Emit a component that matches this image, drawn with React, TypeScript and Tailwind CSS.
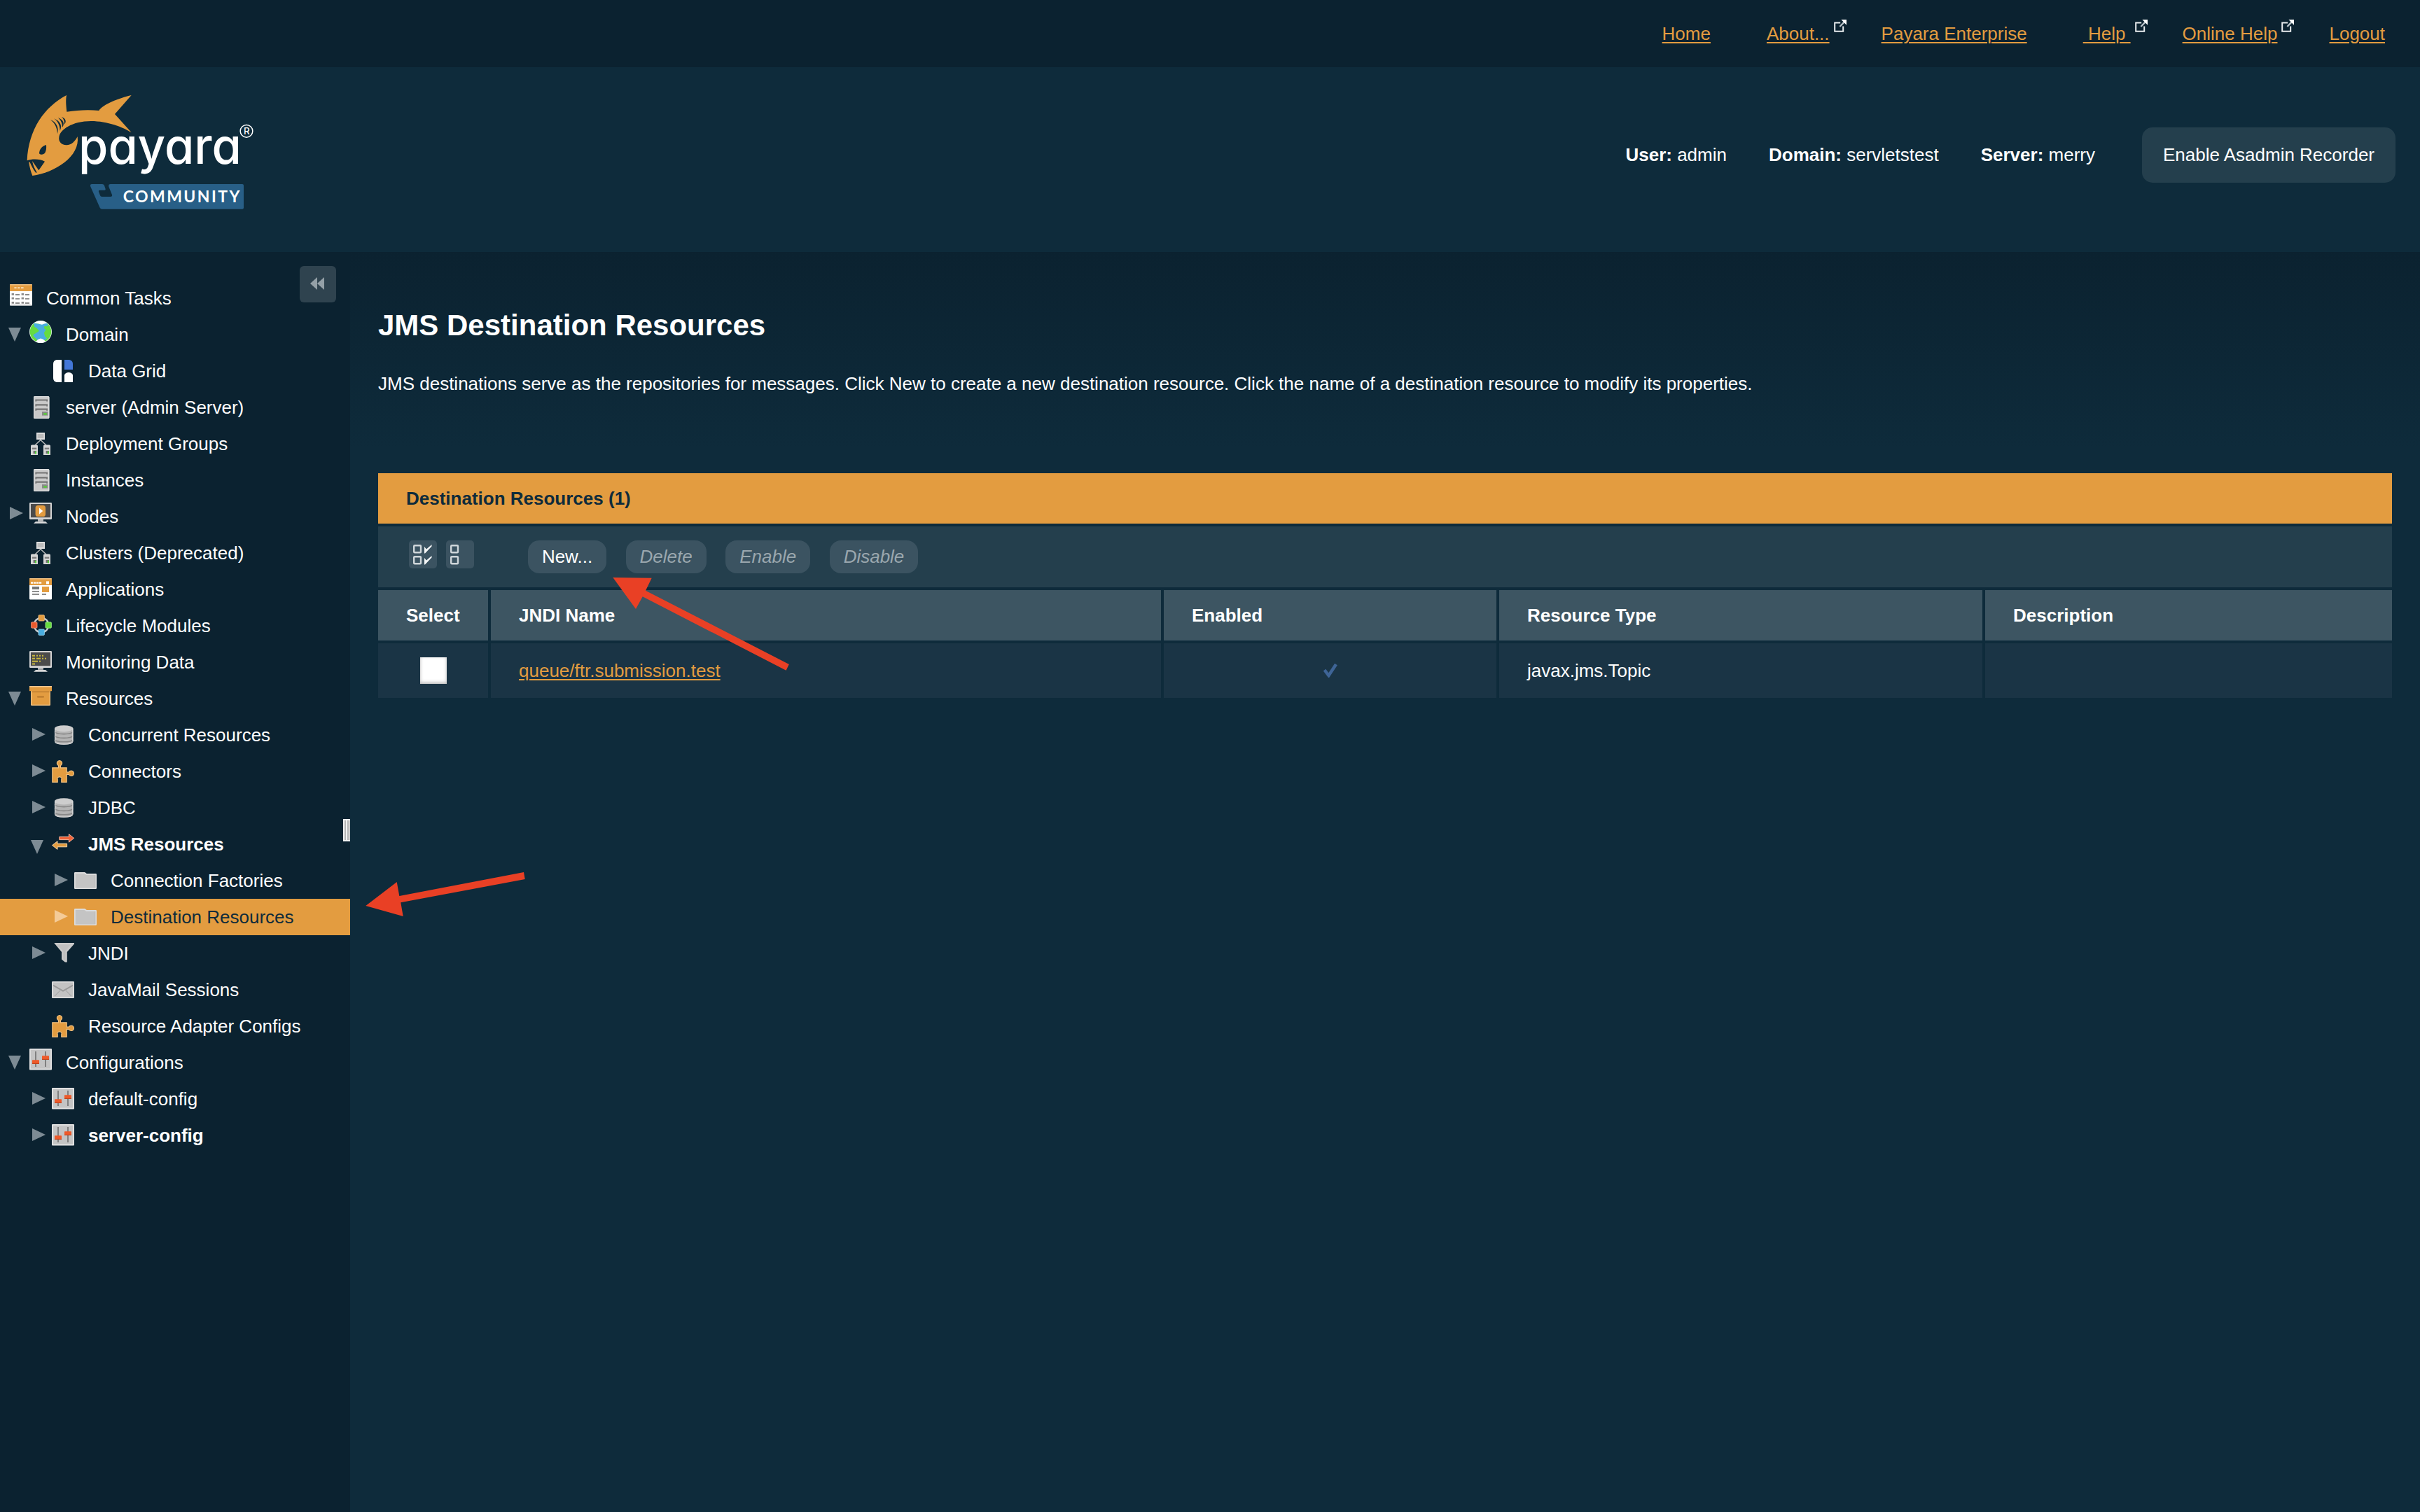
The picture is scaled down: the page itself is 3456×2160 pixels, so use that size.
import React from "react";

type IconName =
  | "calendar"
  | "globe"
  | "grid"
  | "server"
  | "cluster"
  | "nodes"
  | "apps"
  | "lifecycle"
  | "terminal"
  | "box"
  | "database"
  | "puzzle"
  | "transfer"
  | "folder"
  | "funnel"
  | "mail"
  | "sliders";

type TreeItem = {
  label: string;
  icon: IconName;
  level: 0 | 1 | 2;
  handle?: "open" | "closed";
  bold?: boolean;
  selected?: boolean;
  raised?: boolean;
  root?: boolean;
};

const TREE: TreeItem[] = [
  { label: "Common Tasks", icon: "calendar", level: 0, raised: true, root: true },
  { label: "Domain", icon: "globe", level: 0, handle: "open", raised: true },
  { label: "Data Grid", icon: "grid", level: 1 },
  { label: "server (Admin Server)", icon: "server", level: 0 },
  { label: "Deployment Groups", icon: "cluster", level: 0 },
  { label: "Instances", icon: "server", level: 0 },
  { label: "Nodes", icon: "nodes", level: 0, handle: "closed", raised: true },
  { label: "Clusters (Deprecated)", icon: "cluster", level: 0 },
  { label: "Applications", icon: "apps", level: 0 },
  { label: "Lifecycle Modules", icon: "lifecycle", level: 0 },
  { label: "Monitoring Data", icon: "terminal", level: 0 },
  { label: "Resources", icon: "box", level: 0, handle: "open", raised: true },
  { label: "Concurrent Resources", icon: "database", level: 1, handle: "closed" },
  { label: "Connectors", icon: "puzzle", level: 1, handle: "closed" },
  { label: "JDBC", icon: "database", level: 1, handle: "closed" },
  { label: "JMS Resources", icon: "transfer", level: 1, handle: "open", bold: true },
  { label: "Connection Factories", icon: "folder", level: 2, handle: "closed" },
  { label: "Destination Resources", icon: "folder", level: 2, handle: "closed", selected: true },
  { label: "JNDI", icon: "funnel", level: 1, handle: "closed" },
  { label: "JavaMail Sessions", icon: "mail", level: 1 },
  { label: "Resource Adapter Configs", icon: "puzzle", level: 1 },
  { label: "Configurations", icon: "sliders", level: 0, handle: "open", raised: true },
  { label: "default-config", icon: "sliders", level: 1, handle: "closed" },
  { label: "server-config", icon: "sliders", level: 1, handle: "closed", bold: true },
];

function Screen({ children }: { children: React.ReactNode }) {
  return (
    <>
      <rect x="0" y="0" width="16" height="12" rx=".6" fill="#d4d4d4" />
      <rect x="1" y="1" width="14" height="9.6" fill="#4b4b4b" />
      {children}
      <path d="M6 12h4v1.4H6z" fill="#b9b9b9" />
      <path d="M4.5 13.5h7l1.5 1.4H3z" fill="#d8d8d8" />
    </>
  );
}

const ICONS: Record<IconName, React.ReactNode> = {
  calendar: (
    <>
      <rect width="16" height="15.2" rx=".6" fill="#fff" />
      <rect y="14.5" width="16" height=".8" rx=".4" fill="#cfcfcf" />
      <path d="M.6 0h14.8q.6 0 .6.6V5H0V.6Q0 0 .6 0z" fill="#e39c40" />
      <path d="M.5.4h15" stroke="#f0c48c" strokeWidth=".7" />
      <path d="M3.2 2.6h1.6M5.6 2.6h1.6M8 2.6h1.8" stroke="#f5d3a3" strokeWidth="1.1" />
      {[7.2, 10.1, 13.2].map((y) => (
        <g key={y} stroke="#8b8b8b" strokeWidth="1">
          <path d={`M1.3 ${y}h1.7M8.3 ${y}h1.7`} strokeWidth="1.4" />
          <path d={`M4 ${y + 0.3}h3M11 ${y + 0.3}h3`} strokeWidth=".9" />
        </g>
      ))}
    </>
  ),
  globe: (
    <>
      <circle cx="8" cy="8" r="8" fill="#dff3e0" />
      <circle cx="8" cy="8" r="7.6" fill="#66dc40" />
      <path d="M3 1.8L8 2.6l4.4-.8 1 1.6-1.6 1.2-.6 1 .4 1.200-1.2 2 .8 2.6 1.400 1.4-2 1.200H6L3.400 11.600l-.800-1.4 3.2-2L7 7.400 5.2 5.4 3.6 4.4z" fill="#4aaee0" />
      <path d="M10.400 4.200l2-.400-.400 2-1.200.200z" fill="#66dc40" />
      <path d="M3.2 1.7A8 8 0 0 1 12.8 1.7Q10.4 2 9 2.9 7 2.1 3.2 1.7z" fill="#fff" />
      <path d="M4.4 15.1A8 8 0 0 0 11.6 15.1Q9.8 13 8 12.8 6 13.2 4.4 15.1z" fill="#fff" />
    </>
  ),
  grid: (
    <>
      <path d="M7 0v16H3.4Q1 15.6 1 13V3Q1 .4 3.4 0z" fill="#fff" />
      <path d="M9 0h3.5Q15 .5 15 3v4H9z" fill="#4377d8" />
      <path d="M9 16v-5.2Q9.8 9 12 9t3 1.8V16z" fill="#fff" />
    </>
  ),
  server: (
    <>
      <rect x="3" y="0" width="11.2" height="16" rx=".8" fill="#c9c9c9" />
      <rect x="3.3" y=".3" width="10.6" height="15.4" rx=".6" fill="none" stroke="#e2e2e2" strokeWidth=".6" />
      {[2.2, 5.6, 8.8].map((y) => (
        <path key={y} d={`M4.2 ${y}h8.8v1.6h-.9v-.5h-7v.5h-.9z`} fill="#757575" />
      ))}
      <rect x="9" y="11" width="4.2" height="2.8" fill="#8a8a8a" />
      <rect x="10.2" y="12.1" width="2.2" height="1.2" fill="#55d335" />
    </>
  ),
  cluster: (
    <>
      <path d="M4 9L8 5.2 12 9" fill="none" stroke="#bdbdbd" strokeWidth=".7" />
      <rect x="5" y="0" width="6" height="5" fill="#dedede" />
      <rect x="5.8" y="1" width="4.4" height="3" fill="#bcbcbc" />
      {[1, 10].map((x) => (
        <g key={x}>
          <path d={`M${x} 9.6q0-.8.8-.8h3.4q.8 0 .8.8V16h-5z`} fill="#d6d6d6" />
          <rect x={x + 0.9} y="10.8" width="3.2" height="1.2" fill="#7e7e7e" />
          <rect x={x + 1.8} y="13" width="2.2" height="2" fill="#707070" />
          <rect x={x + 3} y="13.4" width="1" height="1.8" fill="#4fd233" />
        </g>
      ))}
    </>
  ),
  nodes: (
    <Screen>
      <rect x="4.3" y="2" width="7.2" height="8" rx="1.8" fill="#e39c40" />
      <path d="M7 3.7L9.6 6 7 8.3z" fill="#fff" />
    </Screen>
  ),
  apps: (
    <>
      <rect width="16" height="15.2" rx=".6" fill="#fff" />
      <path d="M.6 0h14.8q.6 0 .6.6V5H0V.6Q0 0 .6 0z" fill="#e39c40" />
      <path d="M.5.4h15" stroke="#f0c48c" strokeWidth=".7" />
      <path d="M1 3.3h8" stroke="#fff" strokeWidth="1.1" strokeDasharray="1.6 .4" />
      <rect x="12" y="2.2" width="2" height="2" fill="#fff" />
      <rect x="2" y="6" width="5" height="2" fill="#777" />
      <path d="M2 9.5h5M2 11.5h5M9 11.5h3" stroke="#8d8d8d" strokeWidth="1" />
      <rect x="9" y="6" width="5" height="4" fill="#e39c40" />
    </>
  ),
  lifecycle: (
    <>
      <circle cx="8.5" cy="7.5" r="5.2" fill="none" stroke="#c6ccd0" strokeWidth="1.1" />
      <rect x="6.5" y=".3" width="4.2" height="4.2" rx=".6" fill="#e39c40" stroke="#f0c48c" strokeWidth=".4" />
      <rect x="1.3" y="5.4" width="4.2" height="4.2" rx=".6" fill="#ea5a2d" stroke="#f29a7f" strokeWidth=".4" />
      <rect x="11.5" y="5.4" width="4.2" height="4.2" rx=".6" fill="#66dc40" stroke="#a5eb8e" strokeWidth=".4" />
      <rect x="6.5" y="10.5" width="4.2" height="4.2" rx=".6" fill="#4aaee0" stroke="#96d2ee" strokeWidth=".4" />
    </>
  ),
  terminal: (
    <Screen>
      <g stroke="#c9b83e" strokeWidth="1">
        <path d="M2 3.4h2M5 3.4h1M7 3.4h1M9 3.4h1" />
        <path d="M2 5.4h2M5 5.4h3M9 5.4h1M11 5.4h1" />
        <path d="M2 7.4h4M7 7.4h1M2 9.3h2" />
      </g>
    </Screen>
  ),
  box: (
    <>
      <path d="M1 4h14v10.4q0 .6-.6.6H1.6q-.6 0-.6-.6z" fill="#f0c07f" />
      <path d="M1.7 4h12.6v10.3H1.7z" fill="#e39c40" />
      <path d="M1.7 4.6h12.6v1H1.7z" fill="#c48434" />
      <path d="M0 1h16v3.6H0z" fill="#e39c40" />
      <path d="M0 1.4h16" stroke="#f3c88f" strokeWidth=".8" />
      <rect x="5.5" y="8" width="5" height="1.4" rx=".6" fill="#c28030" />
    </>
  ),
  database: (
    <>
      <path d="M2 3.4v9.200q0 2.3 6.6 2.3t6.6-2.3V3.400z" fill="#b4b4b4" />
      <ellipse cx="8.6" cy="3.4" rx="6.6" ry="2.3" fill="#cdcdcd" />
      <path d="M2 5.7q1 1.6 6.6 1.6t6.6-1.6M2 8.600q1 1.6 6.6 1.6t6.6-1.6M2 11.4q1 1.5 6.6 1.5t6.6-1.5" fill="none" stroke="#888" strokeWidth=".8" />
      <path d="M2.3 3.4v9.200M14.9 3.4v9.200" stroke="#dedede" strokeWidth=".6" />
      <path d="M2.4 13.2q1.6 1.4 6.2 1.4t6.2-1.4" fill="none" stroke="#d8d8d8" strokeWidth=".6" />
    </>
  ),
  puzzle: (
    <path
      d="M.4 5.4h4.4V3.9Q3.4 2.8 3.8 1.4 4.4.3 5.5.3t1.7 1.1Q7.6 2.8 6.2 3.9v1.5h4.4v3.2h1.5q1-1.4 2.3-1 1.3.4 1.3 1.8t-1.3 1.8q-1.3.3-2.3-1h-1.5v5.5H6.9v-1.9q.6-1.6-1.4-2-2 .4-1.4 2v1.9H.4z"
      fill="#e39c40"
      stroke="#f0c07f"
      strokeWidth=".6"
    />
  ),
  transfer: (
    <>
      <path d="M5.4 2.7h6.8V.8L15.8 3.7l-3.6 2.9V4.8H5.4z" fill="#f0643a" stroke="#f5b59d" strokeWidth=".5" />
      <path d="M10.8 7.6H4V5.9L.3 8.8 4 11.7V9.9h6.8z" fill="#e39c40" stroke="#f6d6a9" strokeWidth=".5" />
    </>
  ),
  folder: (
    <>
      <path d="M0 2.6q0-.6.6-.6h7l1.3 1h6.5q.6 0 .6.6v9.8q0 .6-.6.6H.6q-.6 0-.6-.6z" fill="#dcdcdc" />
      <path d="M.9 3h6.4l1.3 1h6.2v9.2H.9z" fill="#c4c4c4" />
      <path d="M14.9 4v9" stroke="#b3b3b3" strokeWidth=".4" />
    </>
  ),
  funnel: (
    <>
      <path d="M1.6.5H16V1.2L10.9 7v7.3H9.4L7 12.2V7z" fill="#cacaca" />
      <path d="M3.6 1.8h9.8L9.7 6.4v6.8L8.2 12V6.4z" fill="#b8b8b8" opacity=".55" />
    </>
  ),
  mail: (
    <>
      <rect x="0" y="2" width="16" height="12" rx=".6" fill="#e0e0e0" />
      <rect x=".8" y="2.8" width="14.4" height="10.4" fill="#c3c3c3" />
      <path d="M1 4.8l7 4 7-4" fill="none" stroke="#9a9a9a" strokeWidth=".9" />
      <path d="M2 12.6L6 8.4M14 12.6L10 8.4" stroke="#a9a9a9" strokeWidth=".6" />
    </>
  ),
  sliders: (
    <>
      <rect width="16" height="15.2" rx=".5" fill="#e4e4e4" />
      <rect x=".9" y=".9" width="14.2" height="13.4" fill="#c4c4c4" />
      <path d="M4.5 2v11M11.5 2v11" stroke="#6f6f6f" strokeWidth=".8" />
      <rect x="2" y="8.1" width="5" height="2.9" rx=".3" fill="#ee5a2a" />
      <rect x="9" y="5.1" width="5" height="2.9" rx=".3" fill="#ee5a2a" />
      <path d="M2 10.7h5M9 7.7h5" stroke="#b9421d" strokeWidth=".5" />
    </>
  ),
};

function Handle({ kind, selected }: { kind?: "open" | "closed"; selected?: boolean }) {
  return (
    <svg viewBox="0 0 32 32" className={selected ? "size-8 shrink-0 text-[#f4cb98]" : "size-8 shrink-0 text-[#7d8b94]"} fill="currentColor">
      {kind === "open" && <path d="M2 10h18l-9 20z" />}
      {kind === "closed" && <path d="M4 6v18l19-9z" />}
    </svg>
  );
}

const INDENT = ["pl-[10px]", "pl-[42px]", "pl-[74px]"];

function TreeRow({ item }: { item: TreeItem }) {
  return (
    <li
      className={`flex h-[52px] items-start ${item.root ? "pl-[14px]" : INDENT[item.level]} ${
        item.selected ? "bg-[#e39c40] text-[#0e2b3b]" : "text-white"
      } ${item.bold ? "font-bold" : ""}`}
    >
      <span className={`flex shrink-0 ${item.raised ? "pt-[6px]" : "pt-[10px]"}`}>
        {!item.root && <Handle kind={item.handle} selected={item.selected} />}
        <svg viewBox="0 0 16 16" className="size-8 shrink-0">
          {ICONS[item.icon]}
        </svg>
      </span>
      <span className="ml-5 leading-[52px] whitespace-nowrap">{item.label}</span>
    </li>
  );
}

function ExternalIcon() {
  return (
    <svg viewBox="0 0 9 9" className="mb-[22px] ml-[6px] size-[18px]">
      <path d="M4.600 2.200H.6V8.400H6.600V4.800" fill="none" stroke="#e8ecee" strokeWidth="1" />
      <path d="M4.200 5L7.400 1.700" stroke="#b9c3c9" strokeWidth="1.200" />
      <path d="M5.200 0H9V3.900z" fill="#fff" />
    </svg>
  );
}

function NavLink({ label, external, className }: { label: string; external?: boolean; className: string }) {
  return (
    <span className={`flex items-center ${className}`}>
      <a className="whitespace-pre text-[#e39c40] underline decoration-2 underline-offset-[3px]">{label}</a>
      {external && <ExternalIcon />}
    </span>
  );
}

function Logo() {
  return (
    <svg viewBox="99 120 1002 522" className="h-[174px] w-[334px]">
      <path
        d="M285 138C190 188 122 285 116 418L123 419C126 445 132 465 139 483C235 470 345 400 332 315C322 335 306 352 285 352C262 352 250 335 253 318C257 285 310 249 390 249C460 249 528 275 563 298L492 219L563 138C510 150 440 178 424 204C380 199 330 202 286 209C283 180 281 160 285 138z"
        fill="#e39c40"
      />
      <path d="M116 418C140 409 172 411 192 422L166 460L138 420C142 440 150 455 158 469L154 471C142 455 134 440 128 425L122 424z" fill="#0e2b3b" />
      <path d="M198 351C180 355 168 370 168 388C176 396 188 392 193 385C198 375 199 365 198 351z" fill="#0e2b3b" />
      <g fill="#0e2b3b">
        <path d="M215 243C240 252 254 275 246 304C245 278 235 256 215 243z" />
        <path d="M231 238C256 248 269 268 257 290C257 268 248 250 231 238z" />
        <path d="M248 234C271 242 280 262 266 276C268 258 260 244 248 234z" />
        <path d="M264 231C282 237 286 252 276 263C277 250 273 240 264 231z" />
      </g>
      <text
        x="336"
        y="432"
        textLength="699"
        lengthAdjust="spacingAndGlyphs"
        fill="#fff"
        fontSize="212"
        fontWeight="500"
        fontFamily="Inter, sans-serif"
        style={{ fontFeatureSettings: '"cv11"' }}
      >
        payara
      </text>
      <circle cx="1056" cy="292" r="26.500" fill="none" stroke="#fff" strokeWidth="4.500" />
      <text x="1057" y="306" textAnchor="middle" fill="#fff" fontSize="40" fontWeight="500" fontFamily="Inter, sans-serif">
        R
      </text>
      <path
        d="M393 519H438Q444 519 447 525L452 540Q453 545 447 545H428Q421 545 423 551L429 568Q431 573 437 573H474Q482 573 480 565L466 530Q463 519 473 519H1038Q1044 519 1044 525V620Q1044 626 1038 626H437Q431 626 428 620L388 530Q384 519 393 519z"
        fill="#285f87"
      />
      <text x="527" y="598" textLength="500" fill="#fff" fontSize="69" fontWeight="700" fontFamily="Lato, sans-serif">
        COMMUNITY
      </text>
    </svg>
  );
}

function ToolButton({ label, disabled }: { label: string; disabled?: boolean }) {
  return (
    <button
      className={`flex h-[47px] items-center rounded-[16px] bg-[#3b5361] pb-px whitespace-nowrap ${
        disabled ? "px-5 text-[#9aa7ae] italic" : "w-28 justify-center text-white"
      }`}
    >
      {label}
    </button>
  );
}

function SelectIcon({ checks }: { checks?: boolean }) {
  return (
    <svg viewBox="0 0 40 40" className="size-10">
      <rect width="40" height="40" rx="5" fill="#3b5361" />
      <g fill="none" stroke="#cfd6da" strokeWidth="2.400">
        <rect x="7.200" y="7.200" width="9.800" height="10" rx="1" />
        <rect x="7.200" y="23.200" width="9.800" height="10" rx="1" />
      </g>
      {checks && <path d="M22 9l3 3.500L32.500 6v2.500L23 18.500h-1zM22 25l3 3.500L32.500 22v2.500L23 34.500h-1z" fill="#f4f6f7" />}
    </svg>
  );
}

const COLUMNS = "grid grid-cols-[157px_957px_475px_690px_581px] gap-x-1";

export default function App() {
  return (
    <div className="relative flex h-[2160px] w-[3456px] flex-col overflow-hidden bg-[#0e2b3b] font-['Liberation_Sans',Arial,sans-serif] text-[26px] leading-[30px] text-white">
      <nav className="flex h-24 shrink-0 items-center justify-end bg-[#0b2230] pr-[50px]">
        <NavLink label="Home" className="mr-20" />
        <NavLink label="About..." external className="mr-[50px]" />
        <NavLink label="Payara Enterprise" className="mr-20" />
        <NavLink label={"\u00a0Help\u00a0"} external className="mr-[50px]" />
        <NavLink label="Online Help" external className="mr-[50px]" />
        <NavLink label="Logout" className="" />
      </nav>

      <header className="flex h-[264px] shrink-0 items-start justify-between pr-[35px] pl-[33px]">
        <div className="pt-[34px]">
          <Logo />
        </div>
        <div className="flex items-center pt-[86px]">
          <p className="mr-[60px] pb-px">
            <b>User:</b> admin
          </p>
          <p className="mr-[60px] pb-px">
            <b>Domain:</b> servletstest
          </p>
          <p className="mr-[67px] pb-px">
            <b>Server:</b> merry
          </p>
          <button className="h-[79px] w-[362px] rounded-[15px] bg-[#243f4d] pb-px whitespace-nowrap">Enable Asadmin Recorder</button>
        </div>
      </header>

      <div className="flex min-h-0 flex-1">
        <aside className="relative w-[500px] shrink-0 bg-[#0b2230] pt-10">
          <ul>
            {TREE.map((item) => (
              <TreeRow key={item.label} item={item} />
            ))}
          </ul>
          <button className="absolute top-5 right-5 flex size-[52px] items-center justify-center rounded-[6px] bg-[#2f434f]">
            <svg viewBox="0 0 20 18" className="mr-[2px] mb-[2px] h-[18px] w-5" fill="#94a0a7">
              <path d="M10 0v18L0 9zM20 0v18L10 9z" />
            </svg>
          </button>
          <div className="absolute top-[810px] right-0 flex h-8 w-[10px] justify-between border-y-2 border-l-2 border-[#f1f1f1] bg-[#f1f1f1]">
            <span className="w-[2px] bg-[#b5b5b5]" />
            <span className="w-[2px] bg-[#b5b5b5]" />
            <span className="w-[1px] bg-[#b5b5b5]" />
          </div>
        </aside>

        <main className="flex-1 bg-[linear-gradient(180deg,#0b2230_0px,#0e2b3b_280px)] pt-[80px] pr-10 pl-10">
          <h1 className="text-[42px] leading-[50px] font-bold">JMS Destination Resources</h1>
          <p className="mt-[43px] whitespace-nowrap">
            JMS destinations serve as the repositories for messages. Click New to create a new destination resource. Click the name of a
            destination resource to modify its properties.
          </p>

          <section className="mt-[113px] flex w-[2876px] flex-col gap-1">
            <h2 className="h-[72px] bg-[#e39c40] pl-10 leading-[72px] font-bold text-[#0e2b3b]">Destination Resources (1)</h2>

            <div className="flex h-[87px] items-start bg-[#243f4d] pt-5 pl-11">
              <SelectIcon checks />
              <span className="ml-[13px]">
                <SelectIcon />
              </span>
              <div className="ml-[77px] flex gap-[27.5px]">
                <ToolButton label="New..." />
                <ToolButton label="Delete" disabled />
                <ToolButton label="Enable" disabled />
                <ToolButton label="Disable" disabled />
              </div>
            </div>

            <div className={`${COLUMNS} h-[72px] leading-[72px] font-bold`}>
              <div className="bg-[#3d5562] pl-10">Select</div>
              <div className="bg-[#3d5562] pl-10">JNDI Name</div>
              <div className="bg-[#3d5562] pl-10">Enabled</div>
              <div className="bg-[#3d5562] pl-10">Resource Type</div>
              <div className="bg-[#3d5562] pl-10">Description</div>
            </div>

            <div className={`${COLUMNS} h-[78px] leading-[78px]`}>
              <div className="flex items-center justify-center bg-[#1a3445]">
                <span className="size-[38px] bg-white shadow-[inset_0_-2px_5px_#b9b9b9]" />
              </div>
              <div className="bg-[#1a3445] pl-10">
                <a className="text-[#e39c40] underline decoration-2 underline-offset-[3px]">queue/ftr.submission.test</a>
              </div>
              <div className="flex items-center justify-center bg-[#1a3445]">
                <svg viewBox="0 0 20 20" className="size-5" fill="none" stroke="#3e6496" strokeWidth="4.500">
                  <path d="M1.500 9L7.500 17 18 1" />
                </svg>
              </div>
              <div className="bg-[#1a3445] pl-10">javax.jms.Topic</div>
              <div className="bg-[#1a3445]" />
            </div>
          </section>
        </main>
      </div>

      <svg viewBox="0 0 640 500" className="pointer-events-none absolute top-[815px] left-[510px] h-[500px] w-[640px]" fill="#e94025">
        <path d="M365.300 10L420.700 10.700 412 28.700 616.800 134 612.600 142.700 407.700 37.300 398 55z" />
        <path d="M12.300 479L56.700 445 60.300 465 238 431 239.700 441 62.300 474.300 65.700 494z" />
      </svg>
    </div>
  );
}
